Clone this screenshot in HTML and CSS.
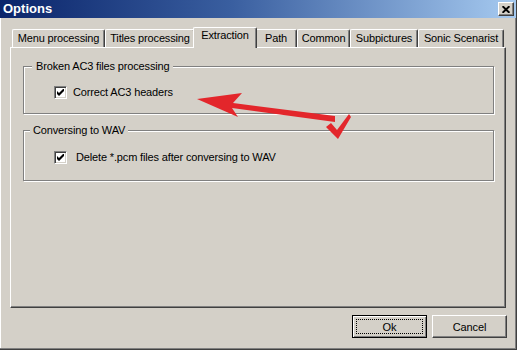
FILE: index.html
```html
<!DOCTYPE html>
<html lang="en">
<head>
<meta charset="utf-8">
<title>Options</title>
<link rel="stylesheet" href="styles.css">
</head>
<body>
<div class="window">
  <div class="titlebar">
    <span class="title">Options</span>
    <button class="close-btn" aria-label="Close">
      <svg width="8" height="7" viewBox="0 0 8 7"><path d="M0.6 0.2 L7.4 6.8 M7.4 0.2 L0.6 6.8" stroke="#000" stroke-width="1.9" fill="none"/></svg>
    </button>
  </div>
  <div class="content">
    <div class="tabs">
      <div class="tab tab-menu">Menu processing</div>
      <div class="tab tab-titles">Titles processing</div>
      <div class="tab tab-extraction tab-active">Extraction</div>
      <div class="tab tab-path">Path</div>
      <div class="tab tab-common">Common</div>
      <div class="tab tab-sub">Subpictures</div>
      <div class="tab tab-sonic">Sonic Scenarist</div>
    </div>
    <div class="panel">
      <div class="group group-ac3">
        <span class="group-label group-label-ac3">Broken AC3 files processing</span>
        <label class="check">
          <span class="box"><svg width="7" height="7" viewBox="0 0 7 7"><path d="M0 2 L2 4 L7 -1 L7 2 L2 7 L0 5 Z" fill="#000"/></svg></span>
          <span class="check-text">Correct AC3 headers</span>
        </label>
      </div>
      <div class="group group-wav">
        <span class="group-label group-label-wav">Conversing to WAV</span>
        <label class="check check-wide">
          <span class="box"><svg width="7" height="7" viewBox="0 0 7 7"><path d="M0 2 L2 4 L7 -1 L7 2 L2 7 L0 5 Z" fill="#000"/></svg></span>
          <span class="check-text">Delete *.pcm files after conversing to WAV</span>
        </label>
      </div>
    </div>
    <div class="buttons">
      <button class="btn btn-default">Ok</button>
      <button class="btn">Cancel</button>
    </div>
  </div>
  <svg class="annotation" width="517" height="350" viewBox="0 0 517 350">
    <path d="M197 99 L242 93 L233 103 L335 116 L335 122 L232 108 L238 117 Z" fill="#e3262b"/>
    <path d="M326 127 L331 123 L337 130 L349 114 L351 117 L338 139 Z" fill="#e3262b"/>
  </svg>
</div>
</body>
</html>
```
FILE: styles.css
```css
* {
  box-sizing: border-box;
}

html,
body {
  margin: 0;
  padding: 0;
}

body {
  width: 517px;
  height: 350px;
  overflow: hidden;
  background: #d4d0c8;
  font-family: "Liberation Sans", Arial, sans-serif;
  font-size: 11px;
  letter-spacing: -0.15px;
  color: #000;
}

.window {
  position: relative;
  width: 517px;
  height: 350px;
  background: #d4d0c8;
  border-right: 1px solid #404040;
  border-bottom: 1px solid #404040;
  box-shadow: inset -1px -1px #808080, inset 1px 0 #ffffff;
}

.titlebar {
  display: flex;
  align-items: center;
  justify-content: space-between;
  height: 18px;
  padding: 0 2px 0 3px;
  background: linear-gradient(90deg, #0a246a 0%, #3a5fa0 45%, #a6caf0 100%);
}

.title {
  color: #fff;
  font-weight: bold;
  font-size: 13px;
  letter-spacing: 0;
  line-height: 18px;
}

.close-btn {
  width: 16px;
  height: 14px;
  padding: 0;
  margin: 0;
  background: #d4d0c8;
  border: 1px solid;
  border-color: #fff #404040 #404040 #fff;
  box-shadow: inset -1px -1px #808080;
  display: flex;
  align-items: center;
  justify-content: center;
}

.content {
  padding: 9px 0 0 10px;
}

.tabs {
  display: flex;
  height: 20px;
  padding-left: 2px;
  position: relative;
  z-index: 1;
}

.tab {
  height: 18px;
  margin-top: 2px;
  padding-top: 2px;
  border-top: 1px solid #fff;
  border-left: 1px solid #fff;
  border-right: 1px solid #404040;
  border-radius: 2px 2px 0 0;
  box-shadow: inset -1px 0 #808080;
  background: #d4d0c8;
  line-height: 13px;
  text-align: center;
  white-space: nowrap;
}

.tab-menu { width: 93px; }
.tab-titles { width: 90px; }
.tab-extraction { width: 64px; }
.tab-path { width: 42px; }
.tab-common { width: 53px; }
.tab-sub { width: 68px; }
.tab-sonic { width: 86px; }

.tab-active {
  height: 21px;
  margin: 0 -2px;
  padding-top: 1px;
  position: relative;
  z-index: 1;
}

.panel {
  width: 496px;
  height: 261px;
  border: 1px solid;
  border-color: #fff #404040 #404040 #fff;
  box-shadow: inset -1px -1px #808080;
  overflow: hidden;
}

.group {
  position: relative;
  margin: 18px 11px 0 12px;
  border: 1px solid #808080;
  box-shadow: inset 1px 1px #fff, 1px 1px #fff;
  padding: 19px 0 14px 30px;
}

.group-wav {
  margin-top: 16px;
  padding: 20px 0 16px 30px;
}

.group-label {
  position: absolute;
  top: -7px;
  background: #d4d0c8;
  line-height: 13px;
  white-space: nowrap;
}

.group-label-ac3 {
  left: 8px;
  padding: 0 3px 0 4px;
}

.group-label-wav {
  left: 6px;
  padding: 0 3px;
}

.check {
  display: flex;
  align-items: center;
  gap: 6px;
  height: 13px;
}

.check-wide {
  gap: 9px;
}

.check-text {
  line-height: 13px;
  margin-top: -1px;
}

.box {
  width: 13px;
  height: 13px;
  flex: none;
  border: 1px solid;
  border-color: #808080 #fff #fff #808080;
  box-shadow: inset 1px 1px #404040, inset -1px -1px #d4d0c8;
  background: #fff;
  display: flex;
  align-items: center;
  justify-content: center;
}

.buttons {
  display: flex;
  justify-content: flex-end;
  gap: 5px;
  margin-top: 7px;
  padding-right: 9px;
}

.btn {
  width: 75px;
  height: 23px;
  margin: 0;
  padding: 0;
  font-family: inherit;
  font-size: 11px;
  letter-spacing: inherit;
  color: #000;
  background: #d4d0c8;
  border: 1px solid;
  border-color: #fff #404040 #404040 #fff;
  box-shadow: inset -1px -1px #808080;
}

.btn-default {
  border-color: #000;
  box-shadow: inset 1px 1px #fff, inset -1px -1px #808080;
  outline: 1px dotted #000;
  outline-offset: -5px;
}

.annotation {
  position: absolute;
  left: 0;
  top: 0;
  pointer-events: none;
}
```
